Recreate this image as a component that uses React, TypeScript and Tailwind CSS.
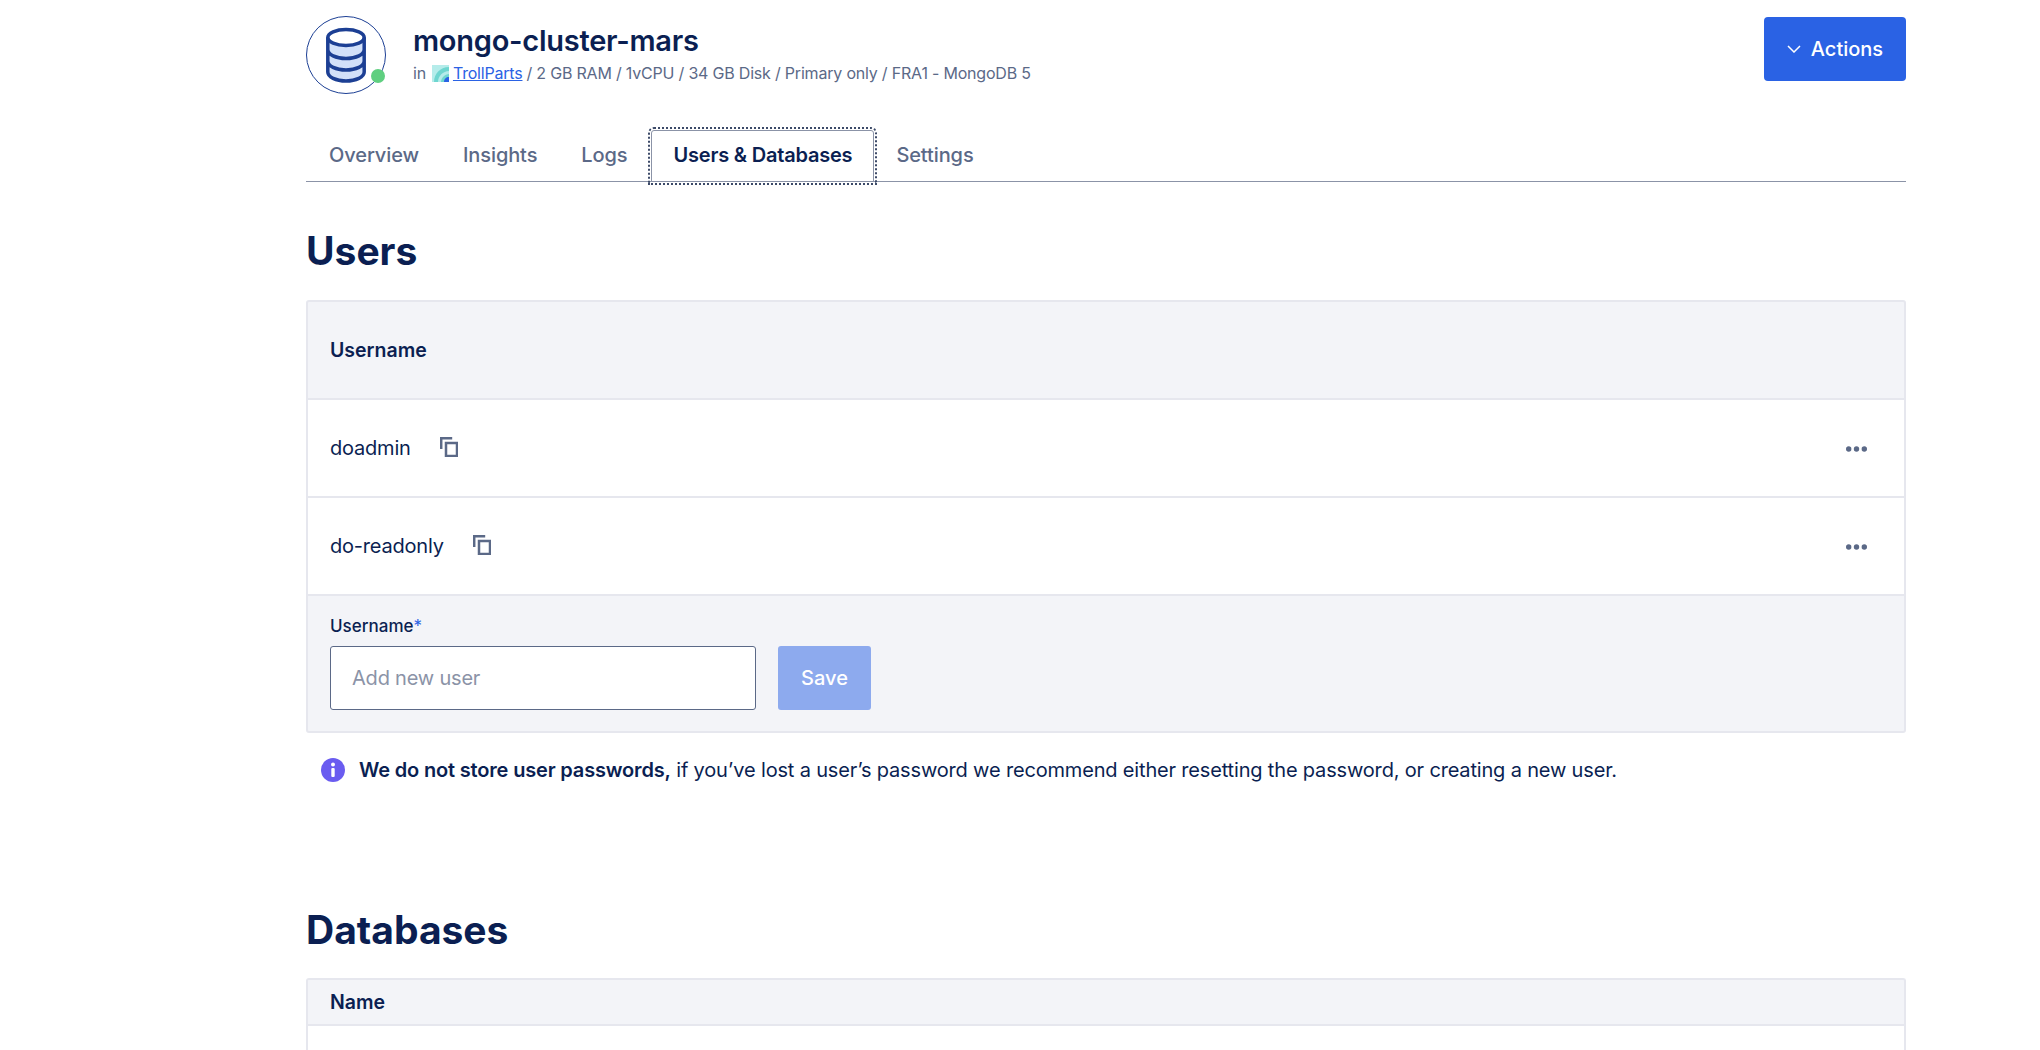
const tabs = ['Overview', 'Insights', 'Logs', 'Users & Databases', 'Settings'];
const users = ['doadmin', 'do-readonly'];

function DatabaseLogo() {
  return (
    <div className="relative w-[80px] h-[80px] shrink-0">
      <svg width="80" height="80" viewBox="0 0 80 80" fill="none">
        <ellipse cx="40" cy="39" rx="39.5" ry="38.5" stroke="#1c3f94" strokeWidth="1" />
        <path d="M22 21v35c0 5 8 9 18 9s18-4 18-9V21z" fill="#d2e0f9" />
        <ellipse cx="40" cy="21.500" rx="18.200" ry="8" fill="#ffffff" stroke="#1c3f94" strokeWidth="3.500" />
        <path
          d="M21.800 21.500V56c0 5 8 9 18.200 9s18.200-4 18.200-9V21.500M21.800 33.500c0 5 8 9 18.200 9s18.200-4 18.200-9M21.800 45c0 5 8 9 18.200 9s18.200-4 18.200-9"
          stroke="#1c3f94"
          strokeWidth="3.500"
        />
      </svg>
      <span className="absolute right-[1px] bottom-[13px] w-[14px] h-[14px] rounded-full bg-[#5fcf80]" />
    </div>
  );
}

function ProjectIcon() {
  return (
    <svg width="17" height="17" viewBox="0 0 17 17" className="shrink-0">
      <rect width="17" height="17" fill="#b5ecea" />
      <path d="M17 2C8 2 2 9 2 17h15z" fill="#6fd6d0" />
      <path d="M17 6c-6 0-11 5-11 11h11z" fill="#b5ecea" />
      <path d="M17 9c-4 0-8 4-8 8h8z" fill="#6fd6d0" />
      <path d="M17 12c-3 0-5 2-5 5h5z" fill="#2a62e4" />
    </svg>
  );
}

function CopyIcon() {
  return (
    <svg width="18" height="20" viewBox="0 0 18 20" fill="none" stroke="#5b6987" strokeWidth="2.500" className="mt-[-2px]">
      <path d="M1.200 12V1.200h11" />
      <rect x="6" y="6" width="11" height="13" />
    </svg>
  );
}

function DotsIcon() {
  return (
    <svg width="21" height="6" viewBox="0 0 21 6" fill="#5b6987" className="mt-[1px]">
      <circle cx="2.700" cy="3" r="2.700" />
      <circle cx="10.500" cy="3" r="2.700" />
      <circle cx="18.300" cy="3" r="2.700" />
    </svg>
  );
}

export default function App() {
  return (
    <div className="h-[1050px] overflow-hidden bg-white text-[#0b1f52] font-['Inter',sans-serif]">
      <div className="w-[1600px] ml-[306px]">
        {/* Header */}
        <div className="flex items-start justify-between pt-[16px] h-[126px]">
          <div className="flex items-center gap-[27px]">
            <DatabaseLogo />
            <div className="mt-[-5px]">
              <h1 className="text-[29px] leading-[38px] font-semibold tracking-[-0.25px]">mongo-cluster-mars</h1>
              <div className="flex items-center text-[16px] leading-[24px] text-[#5b6987] mt-[1px] tracking-[-0.2px]">
                <span>in</span>
                <span className="ml-[6px] mr-[4px] flex"><ProjectIcon /></span>
                <a className="text-[#2a62e4] underline">TrollParts</a>
                <span className="ml-[4px]">/ 2 GB RAM / 1vCPU / 34 GB Disk / Primary only / FRA1 - MongoDB 5</span>
              </div>
            </div>
          </div>
          <button className="mt-[1px] w-[142px] h-[64px] rounded-[4px] bg-[#2a62e4] text-white text-[20px] font-medium flex items-center justify-center gap-[10px]">
            <svg width="14" height="8" viewBox="0 0 14 8" fill="none" stroke="#ffffff" strokeWidth="1.500">
              <path d="M1 1l6 6 6-6" />
            </svg>
            Actions
          </button>
        </div>

        {/* Tabs */}
        <div className="flex h-[56px] border-b border-[#8b93a7] pt-[4px] pl-[1px]">
          {tabs.map((tab) =>
            tab === 'Users & Databases' ? (
              <div
                key={tab}
                className="ml-[2px] px-[21px] pb-[2px] h-[52px] flex items-center text-[20px] font-semibold tracking-[-0.2px] text-[#0b1f52] border border-[#8b93a7] rounded-t-[3px] outline-2 outline-dotted outline-offset-[1px] outline-[#3c4a68]"
              >
                {tab}
              </div>
            ) : (
              <div key={tab} className="px-[22px] pb-[2px] h-[52px] flex items-center text-[20px] font-medium tracking-[-0.1px] text-[#5b6987]">
                {tab}
              </div>
            )
          )}
        </div>

        {/* Users */}
        <h2 className="mt-[45px] text-[39px] leading-[48px] font-bold">Users</h2>
        <div className="mt-[25px] rounded-[3px] border-2 border-[#e6e7ee] bg-[#f3f4f8] overflow-hidden">
          <div className="h-[96px] flex items-center pt-[1px] px-[22px] text-[19.500px] font-semibold">Username</div>
          {users.map((user) => (
            <div key={user} className="h-[98px] bg-white border-t-2 border-[#e6e7ee] flex items-center justify-between pl-[22px] pr-[37px]">
              <div className="flex items-center gap-[29px] text-[20px] tracking-[-0.2px]">
                {user}
                <CopyIcon />
              </div>
              <DotsIcon />
            </div>
          ))}
          <div className="border-t-2 border-[#e6e7ee] pt-[18px] pb-[21px] px-[22px]">
            <div className="text-[17px] leading-[24px] font-medium">
              Username<span className="text-[#2a62e4] font-normal">*</span>
            </div>
            <div className="flex gap-[22px] mt-[8px]">
              <input
                placeholder="Add new user"
                className="w-[426px] h-[64px] bg-white border border-[#5b6987] rounded-[3px] px-[21px] text-[20px] tracking-[-0.2px] placeholder:text-[#8b93a7]"
              />
              <button className="w-[93px] h-[64px] rounded-[3px] bg-[#8daaee] text-white text-[20px] font-medium">Save</button>
            </div>
          </div>
        </div>

        {/* Password note */}
        <div className="mt-[21px] flex items-center pl-[15px] text-[20px] leading-[32px]">
          <svg width="24" height="24" viewBox="0 0 24 24" className="mr-[14px] shrink-0">
            <circle cx="12" cy="12" r="12" fill="#6a5cf0" />
            <circle cx="12" cy="6.500" r="2" fill="#ffffff" />
            <rect x="10.300" y="10" width="3.400" height="9" rx="1" fill="#ffffff" />
          </svg>
          <p className="tracking-[-0.17px]">
            <span className="font-semibold">We do not store user passwords,</span> if you’ve lost a user’s password we recommend either resetting the password, or creating a new user.
          </p>
        </div>

        {/* Databases */}
        <h2 className="mt-[120px] text-[39px] leading-[48px] font-bold">Databases</h2>
        <div className="mt-[24px] rounded-t-[3px] border-2 border-b-0 border-[#e6e7ee] bg-[#f3f4f8]">
          <div className="h-[44px] flex items-center pt-[1px] px-[22px] text-[19.500px] font-semibold">Name</div>
          <div className="h-[60px] bg-white border-t-2 border-[#e6e7ee]" />
        </div>
      </div>
    </div>
  );
}
